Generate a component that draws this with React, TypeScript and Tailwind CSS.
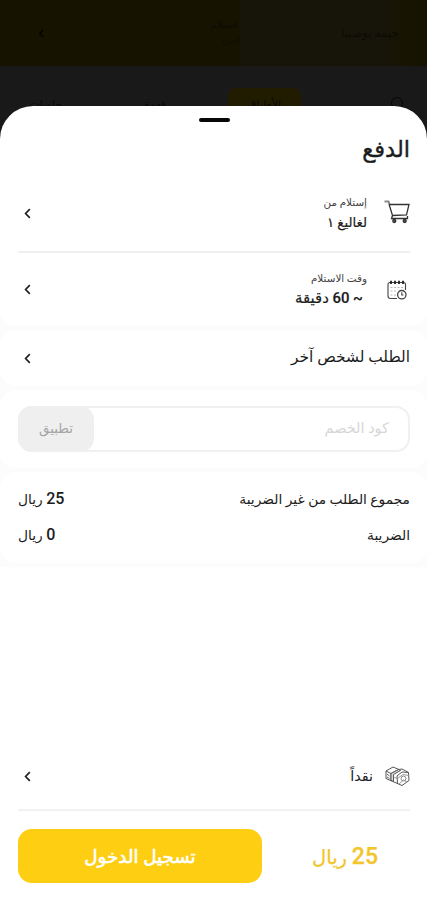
import type { ReactNode } from 'react';

const CartIcon = () => (
  <svg className="w-[26px] h-[26px] -mt-[3px]" viewBox="0 0 26 26" fill="none" stroke="#333" strokeWidth="1.3">
    <path d="M0.5 2.5H4.5L5.5 5" stroke="#888" strokeWidth="2" />
    <path d="M5 5L8.5 16.5L7.5 19.5H23.5V17" />
    <path d="M5.5 5.5H25L22.5 15.8L8.5 16.5" />
    <circle cx="10.3" cy="22" r="1.5" fill="#555" />
    <circle cx="20.7" cy="22" r="1.5" fill="#555" />
  </svg>
);

const CalendarIcon = () => (
  <svg className="w-[20px] h-[20px]" viewBox="0 0 20 20" fill="none" stroke="#444" strokeWidth="1.1">
    <path d="M10 18.5H3.5Q1 18.5 1 16V4.5Q1 2.5 3 2.5H16.5Q18.5 2.5 18.5 4.5V10" />
    <path d="M4 0.8V4M8 0.8V4M12 0.8V4M16 0.8V4" stroke="#222" strokeWidth="1.8" />
    <path d="M3.5 7.5H16M3.5 11H10M3.5 15H9" stroke="#bbb" strokeDasharray="2 1.5" />
    <circle cx="14.8" cy="14.7" r="4.2" strokeWidth="1.3" />
    <path d="M14.8 12.2V15H16.5" />
  </svg>
);

const CashIcon = () => (
  <svg className="w-[25px] h-[21px]" viewBox="0 0 25 21" fill="none" stroke="#555" strokeWidth="1">
    <path d="M1 5L8 1L14 3.5L17 3L23.5 6.5L24 14.5L17 19.5L1 12.5Z" />
    <path d="M1 5L6 7.5V14.5M6 7.5L13.5 3.5M12 10L12.5 17.5M12 10L17 6L23.5 6.5" />
    <path d="M6 7.5L13.5 3.5L15.5 4.5L8.5 8.5V15.5L6 14.5Z" fill="#ddd" />
    <path d="M2 8L4.5 10M2 11L4.5 12.5M9.5 11L11 12.5" stroke="#666" />
    <path d="M13 12L18 8.5L23.5 9.5M14 18L18.5 14L22 16" stroke="#999" />
    <circle cx="18.5" cy="12.5" r="2.4" stroke="#888" />
  </svg>
);

const Chevron = () => (
  <svg className="w-[7px] h-[11px] ml-[6px] shrink-0" viewBox="0 0 7 11" fill="none" stroke="#222" strokeWidth="1.7">
    <path d="M5.8 1.2L1.6 5.5L5.8 9.8" />
  </svg>
);

const DeliveryRow = ({ icon, label, value }: { icon: ReactNode; label: string; value: ReactNode }) => (
  <div className="flex-1 flex items-center">
    <div className="w-[26px] flex justify-center">{icon}</div>
    <div className="flex-1 pr-[17px] pt-px">
      <div className="text-[10.4px] leading-[16px] text-[#444]">{label}</div>
      <div className="text-[13.3px] leading-[23px] font-medium [-webkit-text-stroke:0.2px]">{value}</div>
    </div>
    <Chevron />
  </div>
);

const totals = [
  { label: 'مجموع الطلب من غير الضريبة', amount: '25' },
  { label: 'الضريبة', amount: '0' },
];

export default function App() {
  return (
    <div
      dir="rtl"
      className="relative w-[427px] h-[900px] overflow-hidden bg-[#191919] text-[#1c1c1c] font-[Roboto,'DejaVu_Sans',sans-serif]"
    >
      {/* Dimmed page */}
      <div className="h-[66px] bg-[#161300] text-[#0c0b03] flex items-center pl-[39px]">
        <div className="w-[187px] h-full bg-linear-to-l from-[#161300] from-5% to-[#17150a] to-25% flex items-center pr-[28px] text-[12px]">
          جيمه بوصيبا
        </div>
        <div className="flex-1 text-[10.5px] leading-[16px]">
          <div className="pr-[2px]">استلام</div>
          <div className="text-[8px] text-[#110e00]">الفرع</div>
        </div>
        <svg className="w-[5px] h-[9px]" viewBox="0 0 5 9" fill="none" stroke="#050500" strokeWidth="1.8">
          <path d="M4 1L1 4.5L4 8" />
        </svg>
      </div>
      <div className="h-[60px] pt-[22px] flex text-[11px] text-[#080808]">
        <svg className="w-[15px] h-[18px] mt-[8px] mr-[23px]" viewBox="0 0 15 18" fill="none" stroke="#050505">
          <circle cx="8" cy="7" r="5.5" />
        </svg>
        <div className="w-[73px] h-[28px] mr-[88px] rounded-lg bg-[#211c00] text-center leading-[34px]">الأطباق</div>
        <div className="mr-[62px] leading-[34px]">قهوة</div>
        <div className="mr-[82px] leading-[34px]">حلويات</div>
      </div>

      {/* Payment sheet */}
      <div className="absolute inset-x-0 top-[106px] bottom-0 bg-white rounded-t-[33px] overflow-hidden flex flex-col">
        <div className="w-[31px] h-[4px] mt-[12px] mr-[197px] rounded-sm bg-[#080808] shrink-0" />
        <h1 className="h-[55px] px-[17px] text-[22.5px] leading-[54px] font-medium [-webkit-text-stroke:0.4px] shrink-0">
          الدفع
        </h1>

        <div className="bg-[#fcfcfc] flex flex-col gap-[4px] pb-[4px]">
          <div className="h-[149px] pr-[17px] pl-[18px] bg-white rounded-b-2xl flex flex-col">
            <DeliveryRow icon={<CartIcon />} label="إستلام من" value="لغاليغ ١" />
            <div className="h-[2px] mt-px bg-[#f0f0f0]" />
            <DeliveryRow
              icon={<CalendarIcon />}
              label="وقت الاستلام"
              value={<span className="pr-[4px] text-[14.9px]">~ 60 دقيقة</span>}
            />
          </div>

          <div className="h-[56px] pr-[17px] pl-[18px] bg-white rounded-2xl flex items-center justify-between text-[15.4px]">
            <span>الطلب لشخص آخر</span>
            <Chevron />
          </div>

          <div className="h-[78px] pr-[17px] pl-[18px] bg-white rounded-2xl flex items-center">
            <div className="flex-1 h-[46px] border-2 border-[#f0f0f0] rounded-[14px] flex items-center justify-between">
              <span className="pr-[19px] text-[14.5px] text-[#d6d6d6]">كود الخصم</span>
              <button className="w-[76px] h-[46px] -ml-[2px] rounded-[14px] bg-[#efefef] text-[13.4px] text-[#a5a5a5]">
                تطبيق
              </button>
            </div>
          </div>

          <div className="h-[91px] pr-[17px] pl-[18px] pt-[9px] bg-white rounded-2xl">
            {totals.map((row) => (
              <div key={row.label} className="h-[36px] flex items-center justify-between text-[13.8px]">
                <span>{row.label}</span>
                <span className="font-medium">
                  <span className="text-[16px]">{row.amount}</span> ريال
                </span>
              </div>
            ))}
          </div>
        </div>

        {/* Footer */}
        <div className="mt-auto pr-[17px] pl-[18px] shrink-0">
          <div className="h-[67px] border-b-2 border-[#f2f2f2] flex items-center">
            <CashIcon />
            <span className="flex-1 pr-[12px] text-[14.4px]">نقداً</span>
            <Chevron />
          </div>
          <div className="h-[89px] pb-[17px] pt-[18px] flex items-center">
            <div className="flex-1 pr-[32px] pt-[3px] text-[19.5px] font-medium text-[#f3c52d] [-webkit-text-stroke:0.25px]">
              <span className="text-[23px]">25</span> ريال
            </div>
            <button className="w-[244px] h-[54px] pt-[2px] rounded-[14px] bg-[#fdce12] text-white text-[18.3px] font-medium [-webkit-text-stroke:0.6px]">
              تسجيل الدخول
            </button>
          </div>
        </div>
      </div>
    </div>
  );
}
